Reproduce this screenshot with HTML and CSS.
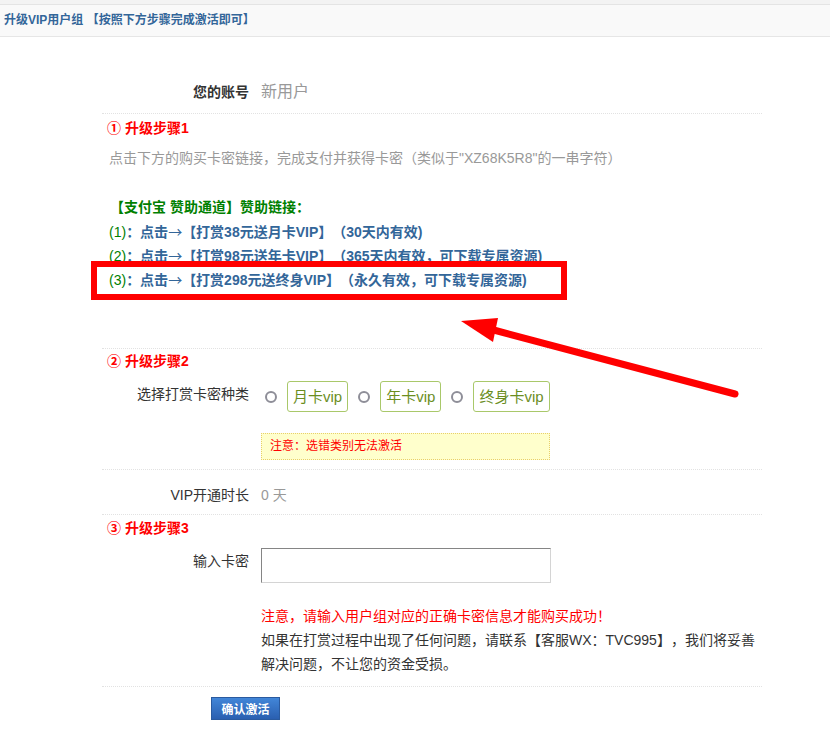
FILE: index.html
```html
<!DOCTYPE html>
<html lang="zh-CN">
<head>
    <meta charset="UTF-8">
    <title>升级VIP用户组</title>
    <link rel="stylesheet" href="styles.css">
</head>
<body>
    <div class="topbar"></div>
    <div class="panel-head">升级VIP用户组 【按照下方步骤完成激活即可】</div>

    <div class="form">
        <div class="row row-account sep">
            <div class="label bold">您的账号</div>
            <div class="value muted big">新用户</div>
        </div>

        <div class="section step1 sep">
            <div class="step-title">① 升级步骤1</div>
            <p class="tip">点击下方的购买卡密链接，完成支付并获得卡密（类似于"XZ68K5R8"的一串字符）</p>
            <div class="pay-title">【支付宝 赞助通道】赞助链接：</div>
            <div class="pay-link"><span class="num">(1)</span><b>：点击<span class="arr">→</span>【打赏38元送月卡VIP】（30天内有效)</b></div>
            <div class="pay-link"><span class="num">(2)</span><b>：点击<span class="arr">→</span>【打赏98元送年卡VIP】（365天内有效，可下载专属资源)</b></div>
            <div class="pay-link"><span class="num">(3)</span><b>：点击<span class="arr">→</span>【打赏298元送终身VIP】（永久有效，可下载专属资源)</b></div>
        </div>

        <div class="section step2 sep">
            <div class="step-title">② 升级步骤2</div>
            <div class="row row-type">
                <div class="label">选择打赏卡密种类</div>
                <div class="value">
                    <div class="choices">
                        <span class="radio"></span><span class="choice">月卡vip</span>
                        <span class="radio"></span><span class="choice">年卡vip</span>
                        <span class="radio"></span><span class="choice">终身卡vip</span>
                    </div>
                    <div class="note">注意：选错类别无法激活</div>
                </div>
            </div>
        </div>

        <div class="row row-days sep">
            <div class="label">VIP开通时长</div>
            <div class="value muted">0 天</div>
        </div>

        <div class="section step3 sep">
            <div class="step-title">③ 升级步骤3</div>
            <div class="row row-code">
                <div class="label">输入卡密</div>
                <div class="value"><input class="code-input" type="text"></div>
            </div>
            <div class="row row-help">
                <div class="label"></div>
                <div class="value help">
                    <div class="warn">注意，请输入用户组对应的正确卡密信息才能购买成功！</div>
                    <div class="line">如果在打赏过程中出现了任何问题，请联系【客服WX：TVC995】，我们将妥善</div>
                    <div class="line">解决问题，不让您的资金受损。</div>
                </div>
            </div>
        </div>

        <button class="btn-submit">确认激活</button>
    </div>

    <!-- 标注：红框 + 箭头 -->
    <svg class="marks" width="830" height="730" viewBox="0 0 830 730">
        <rect x="94" y="264" width="470" height="33" fill="none" stroke="#ff0000" stroke-width="6"/>
        <line x1="735" y1="394" x2="490" y2="329" stroke="#ff0000" stroke-width="7" stroke-linecap="round"/>
        <polygon points="461,321 498,318 493,342" fill="#ff0000"/>
    </svg>
</body>
</html>
```

FILE: styles.css
```css
* {
    margin: 0;
    padding: 0;
    box-sizing: border-box;
}

body {
    position: relative;
    font-family: "Liberation Sans", "Noto Sans CJK SC", sans-serif;
    font-size: 14px;
    color: #333;
    background: #fff;
    width: 830px;
    height: 730px;
    overflow: hidden;
    text-spacing-trim: space-all;
}

.topbar {
    height: 5px;
    background: #f3f3f3;
    border-bottom: 1px solid #e4e4e4;
}

.panel-head {
    height: 32px;
    line-height: 31px;
    padding-left: 4px;
    background: #f9f9f9;
    border-bottom: 1px solid #e6e6e6;
    font-size: 12px;
    font-weight: bold;
    color: #336699;
}

.form {
    margin-left: 102px;
    width: 660px;
}

.sep {
    border-bottom: 1px dotted #e2e2e2;
}

.row {
    display: flex;
    align-items: flex-start;
}

.label {
    width: 159px;
    height: 26px;
    flex-shrink: 0;
    padding-right: 12px;
    text-align: right;
    line-height: 26px;
}

.bold {
    font-weight: bold;
}

.value {
    line-height: 26px;
}

.muted {
    color: #999;
}

.big {
    font-size: 16px;
}

.row-account {
    margin-top: 40px;
    padding: 0 0 6px;
}

.row-account .label,
.row-account .value,
.row-days .label,
.row-days .value {
    height: 30px;
    line-height: 30px;
}

.step-title {
    height: 20px;
    padding-left: 5px;
    line-height: 20px;
    font-weight: bold;
    color: #ff0000;
}

.step1 {
    height: 235px;
    padding-top: 4px;
}

.tip {
    height: 20px;
    margin-top: 10px;
    padding-left: 7px;
    line-height: 20px;
    color: #999;
}

.pay-title {
    height: 24px;
    margin-top: 27px;
    padding-left: 8px;
    line-height: 24px;
    font-weight: bold;
    color: #008000;
}

.pay-link {
    height: 24px;
    padding-left: 7px;
    line-height: 24px;
    color: #336699;
}

.pay-link .num {
    color: #008000;
}

.arr {
    font-family: "Noto Sans CJK SC", sans-serif;
    font-weight: normal;
}

.step2 {
    height: 121px;
    padding-top: 2px;
}

.row-type {
    margin-top: 10px;
}

.choices {
    display: flex;
    align-items: center;
    gap: 10px;
    padding-left: 4px;
    height: 31px;
}

.radio {
    width: 12px;
    height: 12px;
    border: 2px solid #8e8e98;
    border-radius: 50%;
}

.choice {
    height: 31px;
    line-height: 29px;
    padding: 0 5px;
    border: 1px solid #a9c86a;
    border-radius: 3px;
    font-size: 15px;
    color: #6b8e1f;
}

.note {
    margin-top: 21px;
    width: 289px;
    height: 27px;
    line-height: 25px;
    padding-left: 8px;
    background: #ffffcc;
    border: 1px dotted #e8cf6a;
    font-size: 12px;
    color: #ff0000;
}

.row-days {
    height: 45px;
    padding-top: 10px;
}

.step3 {
    height: 172px;
    padding-top: 3px;
}

.row-code {
    margin-top: 10px;
    height: 35px;
}

.code-input {
    width: 290px;
    height: 35px;
    border: 1px solid #d4d4d4;
    border-top-color: #858585;
    border-left-color: #858585;
    background: #fff;
    outline: none;
}

.row-help {
    margin-top: 21px;
}

.help {
    white-space: nowrap;
}

.help .warn,
.help .line {
    height: 24px;
    line-height: 24px;
}

.warn {
    color: #ff0000;
}

.btn-submit {
    display: block;
    margin: 10px 0 0 109px;
    width: 69px;
    height: 23px;
    border: 1px solid #2a5a9f;
    background: linear-gradient(#4286d8, #2a5fb0);
    color: #fff;
    font-family: "Liberation Sans", "Noto Sans CJK SC", sans-serif;
    font-size: 12px;
    font-weight: bold;
}

.marks {
    position: absolute;
    top: 0;
    left: 0;
    pointer-events: none;
}
```
